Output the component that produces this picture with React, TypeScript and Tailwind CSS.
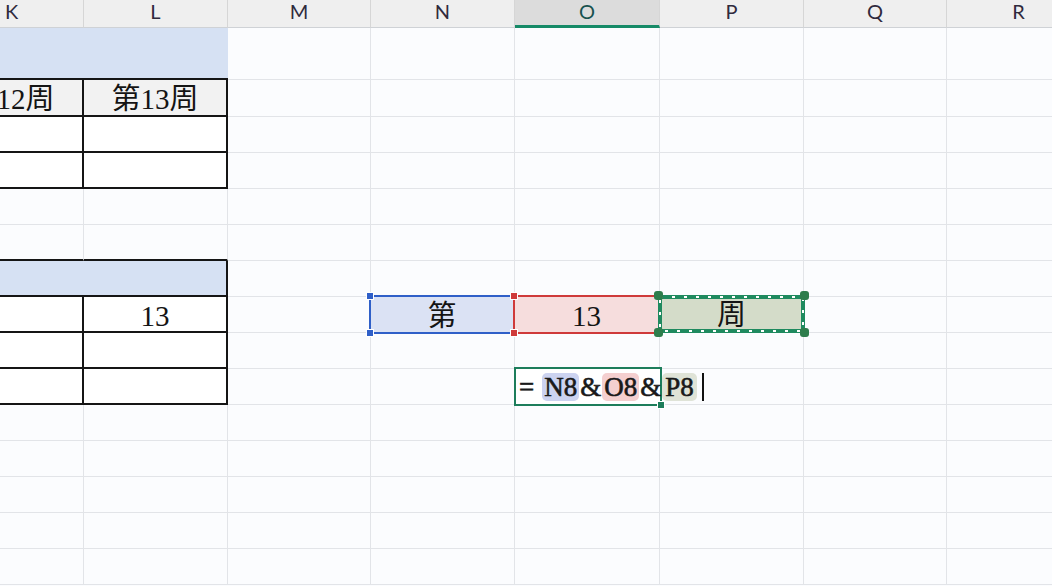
import React from "react";

const COLS = ["K", "L", "M", "N", "O", "P", "Q", "R"];
const GRID = "grid grid-cols-[144px_144px_143px_144px_145px_144px_143px_144px] grid-rows-[100%]";
const CELL_FONT = "font-['Liberation_Serif','Noto_Sans_CJK_SC',serif] text-[29px] leading-none text-[#141414]";
const BLACK = "border-[#151515]";

function Handle({ pos, color }: { pos: string; color: string }) {
  return <div className={`absolute w-[8px] h-[8px] border border-white ${pos} ${color}`} />;
}

function Corners({ color }: { color: string }) {
  return (
    <>
      <Handle pos="-left-[5px] -top-[5px]" color={color} />
      <Handle pos="-left-[5px] -bottom-[5px]" color={color} />
      <Handle pos="-right-[5px] -top-[5px]" color={color} />
      <Handle pos="-right-[5px] -bottom-[5px]" color={color} />
    </>
  );
}

function tableCell(r: number, c: number): string {
  const grid = "border-r border-b border-[#e2e4e8]";
  if (c > 1) return grid;
  const isK = c === 0;
  switch (r) {
    case 0:
      return `border-b-2 ${BLACK} bg-[#d6e1f3]`;
    case 1:
      return `border-r-2 border-b-2 ${BLACK} bg-[#f2f2f2]`;
    case 2:
    case 3:
    case 7:
    case 8:
    case 9:
      return `border-r-2 border-b-2 ${BLACK} bg-white`;
    case 5:
      return "border-r border-b-2 border-r-[#e2e4e8] border-b-[#151515]";
    case 6:
      return isK
        ? `border-b-2 ${BLACK} bg-[#d6e1f3]`
        : `border-r-2 border-b-2 ${BLACK} bg-[#d6e1f3]`;
    default:
      return grid;
  }
}

function cellText(r: number, c: number): string {
  if (r === 1 && c === 0) return "第12周";
  if (r === 1 && c === 1) return "第13周";
  if (r === 7 && c === 1) return "13";
  return "";
}

function RefN() {
  return (
    <div className="absolute -left-[2px] -top-[2px] -right-[1px] -bottom-[2px] border-2 border-[#2f5fc8] bg-[#dbe2f4] flex items-center justify-center pt-[4px]">
      <span className={CELL_FONT}>第</span>
      <Corners color="bg-[#2f5fc8]" />
    </div>
  );
}

function RefO() {
  return (
    <div className="absolute -left-[2px] -top-[2px] -right-[1px] -bottom-[2px] border-2 border-[#cf3a3a] bg-[#f6dddd] flex items-center justify-center pt-[4px]">
      <span className={CELL_FONT}>13</span>
      <Corners color="bg-[#cf3a3a]" />
    </div>
  );
}

function RefP() {
  return (
    <div className="absolute -left-[2px] -top-[2px] w-[147px] h-[38px] bg-[#d4dcc9] flex items-center justify-center pt-[3px]">
      <svg className="absolute inset-0" width="147" height="38" viewBox="0 0 147 38">
        <rect x="2" y="2" width="143" height="34" fill="none" stroke="#1f8a5f" strokeWidth="4" />
        <rect x="2" y="2" width="143" height="34" fill="none" stroke="#ffffff" strokeWidth="2" strokeDasharray="3 9" />
      </svg>
      <span className={`relative ${CELL_FONT}`}>周</span>
      <div className="absolute -left-[4px] -top-[4px] w-[9px] h-[9px] rounded-[3px] bg-[#2e7d4c]" />
      <div className="absolute -left-[4px] -bottom-[4px] w-[9px] h-[9px] rounded-[3px] bg-[#2e7d4c]" />
      <div className="absolute -right-[4px] -top-[4px] w-[9px] h-[9px] rounded-[3px] bg-[#2e7d4c]" />
      <div className="absolute -right-[4px] -bottom-[4px] w-[9px] h-[9px] rounded-[3px] bg-[#2e7d4c]" />
    </div>
  );
}

function Editor() {
  return (
    <div className="absolute -left-[1px] -top-[2px] w-[148px] -bottom-[2px] border-2 border-[#1d7d5b] bg-white">
      <div className="absolute left-[3px] top-0 bottom-0 flex items-center whitespace-nowrap font-['Liberation_Serif',serif] text-[27px] leading-[28px] text-[#1a1a1a] [-webkit-text-stroke:0.6px_#1a1a1a]">
        <span className="mr-[8px]">=</span>
        <span className="rounded-[5px] px-[2px] bg-[#ccd3f0]">N8</span>
        <span className="mx-[1px]">&amp;</span>
        <span className="rounded-[5px] px-[2px] bg-[#f4cfcf]">O8</span>
        <span className="mx-[1px]">&amp;</span>
        <span className="rounded-[5px] px-[3px] bg-[#dfe3d7]">P8</span>
        <span className="ml-[5px] w-[2px] h-[28px] bg-[#111]" />
      </div>
      <div className="absolute -right-[5px] -bottom-[5px] w-[8px] h-[8px] border border-white bg-[#1d7d5b]" />
    </div>
  );
}

function rowHeight(r: number): string {
  if (r === 0) return "h-[52px]";
  if (r === 1) return "h-[37px]";
  return "h-[36px]";
}

export default function App() {
  const rows = Array.from({ length: 15 }, (_, i) => i);
  return (
    <div className="w-[1052px] h-[586px] overflow-hidden bg-[#fbfcfe]">
      <div className="-ml-[60px] w-max">
        <div className={`${GRID} h-[28px]`}>
          {COLS.map((col) =>
            col === "O" ? (
              <div
                key={col}
                className="flex justify-center items-start bg-[#dcdcdc] border-r border-r-[#d6d6d6] border-b-[3px] border-b-[#168a67] font-['Lato',sans-serif] text-[20px] leading-[22px] text-[#18524f]"
              >
                {col}
              </div>
            ) : (
              <div
                key={col}
                className="flex justify-center items-start bg-[#efefef] border-r border-b border-r-[#d6d6d6] border-b-[#cfd2d6] font-['Lato',sans-serif] text-[20px] leading-[22px] text-[#2f2a3d]"
              >
                {col}
              </div>
            )
          )}
        </div>
        {rows.map((r) => (
          <div key={r} className={`${GRID} ${rowHeight(r)}`}>
            {COLS.map((col, c) => {
              if (r === 7 && col === "N")
                return (
                  <div key={col} className="relative border-r border-b border-[#e2e4e8]">
                    <RefN />
                  </div>
                );
              if (r === 7 && col === "O")
                return (
                  <div key={col} className="relative border-r border-b border-[#e2e4e8]">
                    <RefO />
                  </div>
                );
              if (r === 7 && col === "P")
                return (
                  <div key={col} className="relative border-r border-b border-[#e2e4e8]">
                    <RefP />
                  </div>
                );
              if (r === 9 && col === "O")
                return (
                  <div key={col} className="relative border-r border-b border-[#e2e4e8]">
                    <Editor />
                  </div>
                );
              const text = cellText(r, c);
              return (
                <div key={col} className={`flex items-center justify-center pt-[4px] ${tableCell(r, c)} ${CELL_FONT}`}>
                  {text}
                </div>
              );
            })}
          </div>
        ))}
      </div>
    </div>
  );
}
